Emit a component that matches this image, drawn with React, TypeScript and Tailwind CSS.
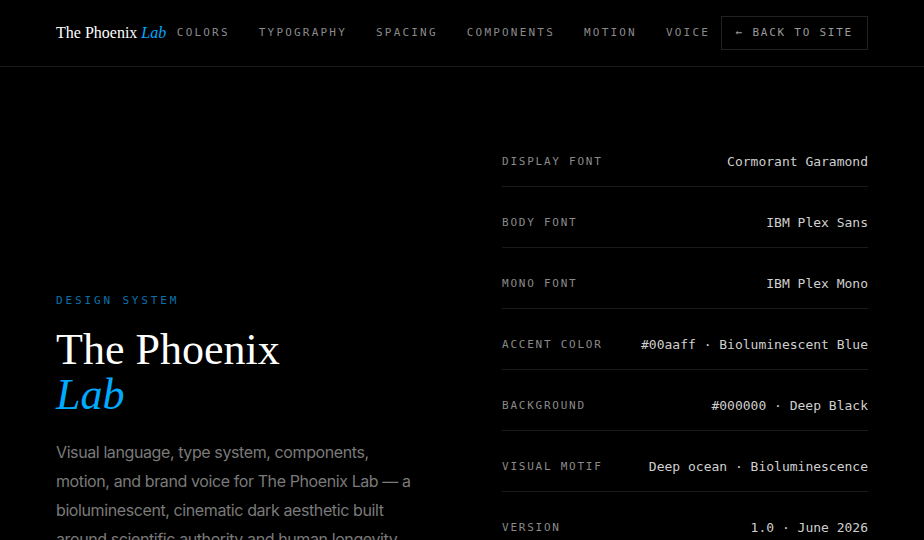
const mono = "font-['DejaVu_Sans_Mono',monospace]";
const serif = "font-['Liberation_Serif',serif]";

const navItems = ["Colors", "Typography", "Spacing", "Components", "Motion", "Voice"];

const specs = [
  { label: "Display Font", value: "Cormorant Garamond" },
  { label: "Body Font", value: "IBM Plex Sans" },
  { label: "Mono Font", value: "IBM Plex Mono" },
  { label: "Accent Color", value: "#00aaff · Bioluminescent Blue" },
  { label: "Background", value: "#000000 · Deep Black" },
  { label: "Visual Motif", value: "Deep ocean · Bioluminescence" },
  { label: "Version", value: "1.0 · June 2026" },
];

function Header() {
  return (
    <header className="flex h-[67px] items-center justify-between border-b border-[#1a1a1a] px-14">
      <a className={`${serif} text-[16px] text-white`}>
        The Phoenix <span className="italic text-[#00aaff]">Lab</span>
      </a>

      <nav className="flex items-center gap-[29px]">
        {navItems.map((item) => (
          <a key={item} className={`${mono} text-[11px] uppercase tracking-[0.2em] text-[#8a8a8a]`}>
            {item}
          </a>
        ))}
      </nav>

      <button className={`${mono} h-[34px] border border-[#222] px-[14px] text-[11px] uppercase tracking-[0.16em] text-[#9a9a9a]`}>
        ← Back to Site
      </button>
    </header>
  );
}

function SpecRow({ label, value }: { label: string; value: string }) {
  return (
    <div className="flex items-center justify-between border-b border-[#1a1a1a] pb-[14px] pt-[26px]">
      <span className={`${mono} text-[11px] uppercase leading-5 tracking-[0.16em] text-[#8a8a8a]`}>
        {label}
      </span>
      <span className={`${mono} text-[13px] leading-5 text-[#cfcfcf]`}>{value}</span>
    </div>
  );
}

export default function App() {
  return (
    <div className="min-h-screen bg-black">
      <Header />

      <main className="grid grid-cols-2 gap-20 px-14 pt-[59px]">
        <section className="pt-[167px]">
          <p className={`${mono} text-[11px] uppercase leading-4 tracking-[0.26em] text-[#0b70ad]`}>
            Design System
          </p>

          <h1 className={`${serif} mt-[18px] text-[44px] leading-[45px] text-white`}>
            The Phoenix
            <br />
            <span className="italic text-[#00aaff]">Lab</span>
          </h1>

          <p className="mt-[21px] max-w-[360px] font-['Inter',sans-serif] text-[16px] leading-[29px] tracking-[-0.025em] text-[#7a7a7a]">
            Visual language, type system, components, motion, and brand voice for The Phoenix Lab — a
            bioluminescent, cinematic dark aesthetic built around scientific authority and human longevity.
          </p>
        </section>

        <section>
          {specs.map((s) => (
            <SpecRow key={s.label} label={s.label} value={s.value} />
          ))}
        </section>
      </main>
    </div>
  );
}
